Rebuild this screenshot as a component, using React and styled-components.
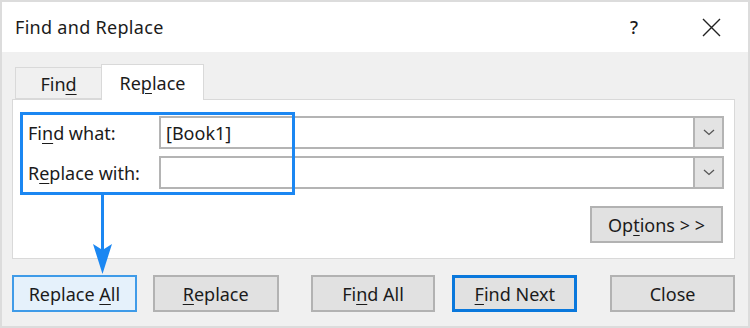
import styled, { createGlobalStyle } from "styled-components";

const GlobalStyle = createGlobalStyle`
  html, body {
    margin: 0;
    padding: 0;
    background: #ffffff;
  }
  * {
    box-sizing: border-box;
  }
`;

const Dialog = styled.div`
  position: relative;
  width: 750px;
  height: 328px;
  border: 2px solid #dcdcdc;
  background: #f0f0f0;
  font-family: "Noto Sans", "Open Sans", sans-serif;
  font-size: 18px;
  color: #1b1b1b;
  display: flex;
  flex-direction: column;
`;

const TitleBar = styled.div`
  height: 50px;
  background: #ffffff;
  display: flex;
  align-items: center;
  padding-left: 13px;
  font-size: 18px;
`;

const Title = styled.span`
  flex: 1;
  letter-spacing: 0.3px;
`;

const TitleButton = styled.span`
  width: ${(p) => p.$w}px;
  margin-left: ${(p) => p.$ml || 0}px;
  display: flex;
  justify-content: center;
  align-items: center;
  font-size: 18px;
  font-weight: 500;
`;

const Body = styled.div`
  flex: 1;
  padding: 12px 13px 0 10px;
`;

const TabStrip = styled.div`
  display: flex;
  align-items: flex-end;
  height: 35px;
  padding-left: 3px;
  position: relative;
  z-index: 1;
`;

const Tab = styled.div`
  height: ${(p) => (p.$active ? 36 : 32)}px;
  width: ${(p) => p.$w}px;
  margin-bottom: ${(p) => (p.$active ? -1 : 0)}px;
  background: ${(p) => (p.$active ? "#ffffff" : "#f0f0f0")};
  border: 1px solid #d9d9d9;
  border-bottom: ${(p) => (p.$active ? "none" : "1px solid #d9d9d9")};
  border-right: ${(p) => (p.$active ? "1px solid #d9d9d9" : "none")};
  display: flex;
  justify-content: center;
  align-items: center;
  padding-top: ${(p) => (p.$active ? 0 : 2)}px;
`;

const Panel = styled.div`
  height: 160px;
  background: #ffffff;
  border: 1px solid #d9d9d9;
  padding: 16px 10px 0 15px;
  display: flex;
  flex-direction: column;
`;

const FieldRow = styled.div`
  display: flex;
  align-items: center;
  height: 33px;
  margin-bottom: 7px;
`;

const Label = styled.div`
  width: 131px;
`;

const Combo = styled.div`
  flex: 1;
  height: 33px;
  border: 2px solid #b4b4b4;
  display: flex;
  align-items: stretch;
`;

const ComboText = styled.div`
  flex: 1;
  padding-left: 5px;
  display: flex;
  align-items: center;
`;

const ComboArrow = styled.div`
  width: 29px;
  background: #e3e3e3;
  border-left: 2px solid #b4b4b4;
  display: flex;
  justify-content: center;
  align-items: center;
`;

const OptionsRow = styled.div`
  display: flex;
  justify-content: flex-end;
  margin-top: 10px;
  padding-right: 1px;
`;

const Button = styled.div`
  width: ${(p) => p.$w || 125}px;
  height: 37px;
  margin-left: ${(p) => p.$ml || 0}px;
  background: ${(p) => (p.$focus ? "#e5f1fb" : "#e1e1e1")};
  border: ${(p) =>
    p.$default
      ? "3px solid #0a78dc"
      : p.$focus
      ? "2px solid #3f9be8"
      : "2px solid #b2b2b2"};
  display: flex;
  justify-content: center;
  align-items: center;
`;

const ButtonRow = styled.div`
  display: flex;
  margin-top: 16px;
`;

const Key = styled.u`
  text-decoration-thickness: 1px;
  text-underline-offset: 3px;
`;

const Highlight = styled.div`
  position: absolute;
  left: 18px;
  top: 110px;
  width: 275px;
  height: 83px;
  border: 3px solid #1b87f2;
  pointer-events: none;
`;

const Arrow = styled.svg`
  position: absolute;
  left: 89px;
  top: 190px;
`;

const Chevron = () => (
  <svg width="12" height="7" viewBox="0 0 12 7">
    <path d="M1 1 L6 5.5 L11 1" fill="none" stroke="#555" strokeWidth="1.3" />
  </svg>
);

export default function App() {
  return (
    <>
      <GlobalStyle />
      <Dialog>
        <TitleBar>
          <Title>Find and Replace</Title>
          <TitleButton $w={20}>?</TitleButton>
          <TitleButton $w={44} $ml={45}>
            <svg width="19" height="19" viewBox="0 0 19 19">
              <path d="M1 1 L18 18 M18 1 L1 18" stroke="#222" strokeWidth="1.4" />
            </svg>
          </TitleButton>
          <TitleButton $w={15} />
        </TitleBar>
        <Body>
          <TabStrip>
            <Tab $w={86}>
              <span>
                Fin<Key>d</Key>
              </span>
            </Tab>
            <Tab $w={103} $active>
              <span>
                Re<Key>p</Key>lace
              </span>
            </Tab>
          </TabStrip>
          <Panel>
            <FieldRow>
              <Label>
                Fi<Key>n</Key>d what:
              </Label>
              <Combo>
                <ComboText>[Book1]</ComboText>
                <ComboArrow>
                  <Chevron />
                </ComboArrow>
              </Combo>
            </FieldRow>
            <FieldRow>
              <Label>
                R<Key>e</Key>place with:
              </Label>
              <Combo>
                <ComboText />
                <ComboArrow>
                  <Chevron />
                </ComboArrow>
              </Combo>
            </FieldRow>
            <OptionsRow>
              <Button $w={133}>
                <span>
                  Op<Key>t</Key>ions &gt; &gt;
                </span>
              </Button>
            </OptionsRow>
          </Panel>
          <ButtonRow>
            <Button $focus>
              <span>
                Replace <Key>A</Key>ll
              </span>
            </Button>
            <Button $w={126} $ml={16}>
              <span>
                <Key>R</Key>eplace
              </span>
            </Button>
            <Button $ml={32}>
              <span>
                Fi<Key>n</Key>d All
              </span>
            </Button>
            <Button $ml={17} $default>
              <span>
                <Key>F</Key>ind Next
              </span>
            </Button>
            <Button $ml={33}>Close</Button>
          </ButtonRow>
        </Body>
        <Highlight />
        <Arrow width="22" height="84" viewBox="0 0 22 84">
          <rect x="10" y="0" width="3" height="60" fill="#1b87f2" />
          <path d="M2 52 L11.5 58 L21 52 L11.5 82 Z" fill="#1b87f2" />
        </Arrow>
      </Dialog>
    </>
  );
}
